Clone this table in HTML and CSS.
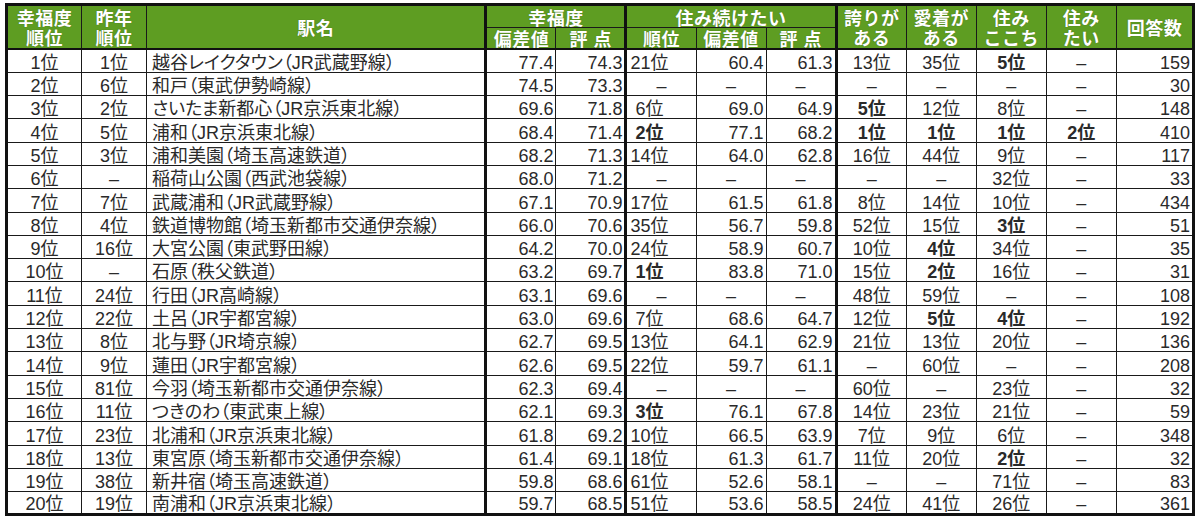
FILE: index.html
```html
<!DOCTYPE html>
<html lang="ja">
<head>
<meta charset="utf-8">
<title>幸福度ランキング</title>
<link rel="stylesheet" href="styles.css">
</head>
<body>
<table class="rank">
<colgroup>
<col class="w-rank"><col class="w-prev"><col class="w-name">
<col class="w-n"><col class="w-n">
<col class="w-n"><col class="w-n"><col class="w-n">
<col class="w-n"><col class="w-n"><col class="w-n"><col class="w-n"><col class="w-cnt">
</colgroup>
<thead>
<tr class="h1">
<th rowspan="2">幸福度<br>順位</th>
<th rowspan="2">昨年<br>順位</th>
<th rowspan="2" class="thick">駅名</th>
<th colspan="2" class="thick">幸福度</th>
<th colspan="3" class="thick">住み続けたい</th>
<th rowspan="2">誇りが<br>ある</th>
<th rowspan="2">愛着が<br>ある</th>
<th rowspan="2" class="dash">住み<br>ここち</th>
<th rowspan="2">住み<br>たい</th>
<th rowspan="2">回答数</th>
</tr>
<tr class="h2">
<th class="dash">偏差値</th>
<th class="thick sp">評点</th>
<th class="dash">順位</th>
<th class="dash">偏差値</th>
<th class="thick sp">評点</th>
</tr>
</thead>
<tbody>
<tr><td class="c">1位</td><td class="c">1位</td><td class="name thick">越谷レイクタウン（JR武蔵野線）</td><td class="r dash">77.4</td><td class="r thick">74.3</td><td class="sr dash">21位</td><td class="r dash">60.4</td><td class="r thick">61.3</td><td class="c">13位</td><td class="c">35位</td><td class="c dash b">5位</td><td class="c">–</td><td class="r">159</td></tr>
<tr><td class="c">2位</td><td class="c">6位</td><td class="name thick">和戸（東武伊勢崎線）</td><td class="r dash">74.5</td><td class="r thick">73.3</td><td class="c dash">–</td><td class="c dash">–</td><td class="c thick">–</td><td class="c">–</td><td class="c">–</td><td class="c dash">–</td><td class="c">–</td><td class="r">30</td></tr>
<tr><td class="c">3位</td><td class="c">2位</td><td class="name thick">さいたま新都心（JR京浜東北線）</td><td class="r dash">69.6</td><td class="r thick">71.8</td><td class="sr dash">6位</td><td class="r dash">69.0</td><td class="r thick">64.9</td><td class="c b">5位</td><td class="c">12位</td><td class="c dash">8位</td><td class="c">–</td><td class="r">148</td></tr>
<tr><td class="c">4位</td><td class="c">5位</td><td class="name thick">浦和（JR京浜東北線）</td><td class="r dash">68.4</td><td class="r thick">71.4</td><td class="sr dash b">2位</td><td class="r dash">77.1</td><td class="r thick">68.2</td><td class="c b">1位</td><td class="c b">1位</td><td class="c dash b">1位</td><td class="c b">2位</td><td class="r">410</td></tr>
<tr><td class="c">5位</td><td class="c">3位</td><td class="name thick">浦和美園（埼玉高速鉄道）</td><td class="r dash">68.2</td><td class="r thick">71.3</td><td class="sr dash">14位</td><td class="r dash">64.0</td><td class="r thick">62.8</td><td class="c">16位</td><td class="c">44位</td><td class="c dash">9位</td><td class="c">–</td><td class="r">117</td></tr>
<tr><td class="c">6位</td><td class="c">–</td><td class="name thick">稲荷山公園（西武池袋線）</td><td class="r dash">68.0</td><td class="r thick">71.2</td><td class="c dash">–</td><td class="c dash">–</td><td class="c thick">–</td><td class="c">–</td><td class="c">–</td><td class="c dash">32位</td><td class="c">–</td><td class="r">33</td></tr>
<tr><td class="c">7位</td><td class="c">7位</td><td class="name thick">武蔵浦和（JR武蔵野線）</td><td class="r dash">67.1</td><td class="r thick">70.9</td><td class="sr dash">17位</td><td class="r dash">61.5</td><td class="r thick">61.8</td><td class="c">8位</td><td class="c">14位</td><td class="c dash">10位</td><td class="c">–</td><td class="r">434</td></tr>
<tr><td class="c">8位</td><td class="c">4位</td><td class="name thick">鉄道博物館（埼玉新都市交通伊奈線）</td><td class="r dash">66.0</td><td class="r thick">70.6</td><td class="sr dash">35位</td><td class="r dash">56.7</td><td class="r thick">59.8</td><td class="c">52位</td><td class="c">15位</td><td class="c dash b">3位</td><td class="c">–</td><td class="r">51</td></tr>
<tr><td class="c">9位</td><td class="c">16位</td><td class="name thick">大宮公園（東武野田線）</td><td class="r dash">64.2</td><td class="r thick">70.0</td><td class="sr dash">24位</td><td class="r dash">58.9</td><td class="r thick">60.7</td><td class="c">10位</td><td class="c b">4位</td><td class="c dash">34位</td><td class="c">–</td><td class="r">35</td></tr>
<tr><td class="c">10位</td><td class="c">–</td><td class="name thick">石原（秩父鉄道）</td><td class="r dash">63.2</td><td class="r thick">69.7</td><td class="sr dash b">1位</td><td class="r dash">83.8</td><td class="r thick">71.0</td><td class="c">15位</td><td class="c b">2位</td><td class="c dash">16位</td><td class="c">–</td><td class="r">31</td></tr>
<tr><td class="c">11位</td><td class="c">24位</td><td class="name thick">行田（JR高崎線）</td><td class="r dash">63.1</td><td class="r thick">69.6</td><td class="c dash">–</td><td class="c dash">–</td><td class="c thick">–</td><td class="c">48位</td><td class="c">59位</td><td class="c dash">–</td><td class="c">–</td><td class="r">108</td></tr>
<tr><td class="c">12位</td><td class="c">22位</td><td class="name thick">土呂（JR宇都宮線）</td><td class="r dash">63.0</td><td class="r thick">69.6</td><td class="sr dash">7位</td><td class="r dash">68.6</td><td class="r thick">64.7</td><td class="c">12位</td><td class="c b">5位</td><td class="c dash b">4位</td><td class="c">–</td><td class="r">192</td></tr>
<tr><td class="c">13位</td><td class="c">8位</td><td class="name thick">北与野（JR埼京線）</td><td class="r dash">62.7</td><td class="r thick">69.5</td><td class="sr dash">13位</td><td class="r dash">64.1</td><td class="r thick">62.9</td><td class="c">21位</td><td class="c">13位</td><td class="c dash">20位</td><td class="c">–</td><td class="r">136</td></tr>
<tr><td class="c">14位</td><td class="c">9位</td><td class="name thick">蓮田（JR宇都宮線）</td><td class="r dash">62.6</td><td class="r thick">69.5</td><td class="sr dash">22位</td><td class="r dash">59.7</td><td class="r thick">61.1</td><td class="c">–</td><td class="c">60位</td><td class="c dash">–</td><td class="c">–</td><td class="r">208</td></tr>
<tr><td class="c">15位</td><td class="c">81位</td><td class="name thick">今羽（埼玉新都市交通伊奈線）</td><td class="r dash">62.3</td><td class="r thick">69.4</td><td class="c dash">–</td><td class="c dash">–</td><td class="c thick">–</td><td class="c">60位</td><td class="c">–</td><td class="c dash">23位</td><td class="c">–</td><td class="r">32</td></tr>
<tr><td class="c">16位</td><td class="c">11位</td><td class="name thick">つきのわ（東武東上線）</td><td class="r dash">62.1</td><td class="r thick">69.3</td><td class="sr dash b">3位</td><td class="r dash">76.1</td><td class="r thick">67.8</td><td class="c">14位</td><td class="c">23位</td><td class="c dash">21位</td><td class="c">–</td><td class="r">59</td></tr>
<tr><td class="c">17位</td><td class="c">23位</td><td class="name thick">北浦和（JR京浜東北線）</td><td class="r dash">61.8</td><td class="r thick">69.2</td><td class="sr dash">10位</td><td class="r dash">66.5</td><td class="r thick">63.9</td><td class="c">7位</td><td class="c">9位</td><td class="c dash">6位</td><td class="c">–</td><td class="r">348</td></tr>
<tr><td class="c">18位</td><td class="c">13位</td><td class="name thick">東宮原（埼玉新都市交通伊奈線）</td><td class="r dash">61.4</td><td class="r thick">69.1</td><td class="sr dash">18位</td><td class="r dash">61.3</td><td class="r thick">61.7</td><td class="c">11位</td><td class="c">20位</td><td class="c dash b">2位</td><td class="c">–</td><td class="r">32</td></tr>
<tr><td class="c">19位</td><td class="c">38位</td><td class="name thick">新井宿（埼玉高速鉄道）</td><td class="r dash">59.8</td><td class="r thick">68.6</td><td class="sr dash">61位</td><td class="r dash">52.6</td><td class="r thick">58.1</td><td class="c">–</td><td class="c">–</td><td class="c dash">71位</td><td class="c">–</td><td class="r">83</td></tr>
<tr><td class="c">20位</td><td class="c">19位</td><td class="name thick">南浦和（JR京浜東北線）</td><td class="r dash">59.7</td><td class="r thick">68.5</td><td class="sr dash">51位</td><td class="r dash">53.6</td><td class="r thick">58.5</td><td class="c">24位</td><td class="c">41位</td><td class="c dash">26位</td><td class="c">–</td><td class="r">361</td></tr>
</tbody>
</table>
</body>
</html>
```

FILE: styles.css
```css
html, body {
  margin: 0;
  background: #ffffff;
}
body {
  padding: 3px 0 0 5px;
}
.rank {
  border-collapse: collapse;
  table-layout: fixed;
  width: 1190px;
  border: 3px solid #111;
  font-family: "Liberation Sans Narrow", "Liberation Sans", "Noto Sans CJK JP", sans-serif;
  font-feature-settings: "palt";
  font-size: 18px;
  color: #2a2a2a;
}
.w-rank { width: 75px; }
.w-prev { width: 65px; }
.w-name { width: 339px; }
.w-n { width: 70px; }
.w-cnt { width: 77px; }

.rank th {
  background: #5e9d22;
  color: #ffffff;
  font-family: "Noto Sans CJK JP", sans-serif;
  font-feature-settings: normal;
  font-weight: 700;
  font-size: 18px;
  line-height: 20px;
  letter-spacing: 0.5px;
  border: 1px solid #1a1a1a;
  padding: 0;
  text-align: center;
  vertical-align: middle;
  text-shadow: 0 0 1px rgba(40, 60, 20, 0.6);
}
.rank .h1 { height: 23px; }
.rank .h2 { height: 21px; }
.rank th.sp { letter-spacing: 6px; text-indent: 6px; }
.rank thead { border-bottom: 2px solid #111; }

.rank tbody tr { height: 23.3px; }
.rank td {
  border: 1px solid #1a1a1a;
  padding: 0 2px;
  line-height: 18px;
  white-space: nowrap;
  overflow: hidden;
  vertical-align: bottom;
}
.rank td.c { text-align: center; }
.rank td.r { text-align: right; }
.rank td.sr { text-align: center; padding: 0 26px 0 2px; }
.rank td.name { text-align: left; padding-left: 5px; }
.rank .b { font-weight: 700; }
.rank .thick { border-right: 3px solid #111; }
.rank td.dash { border-right: 1px dashed #222; }
.rank th.dash { border-right: 1px dotted #e8f0dc; }
```
